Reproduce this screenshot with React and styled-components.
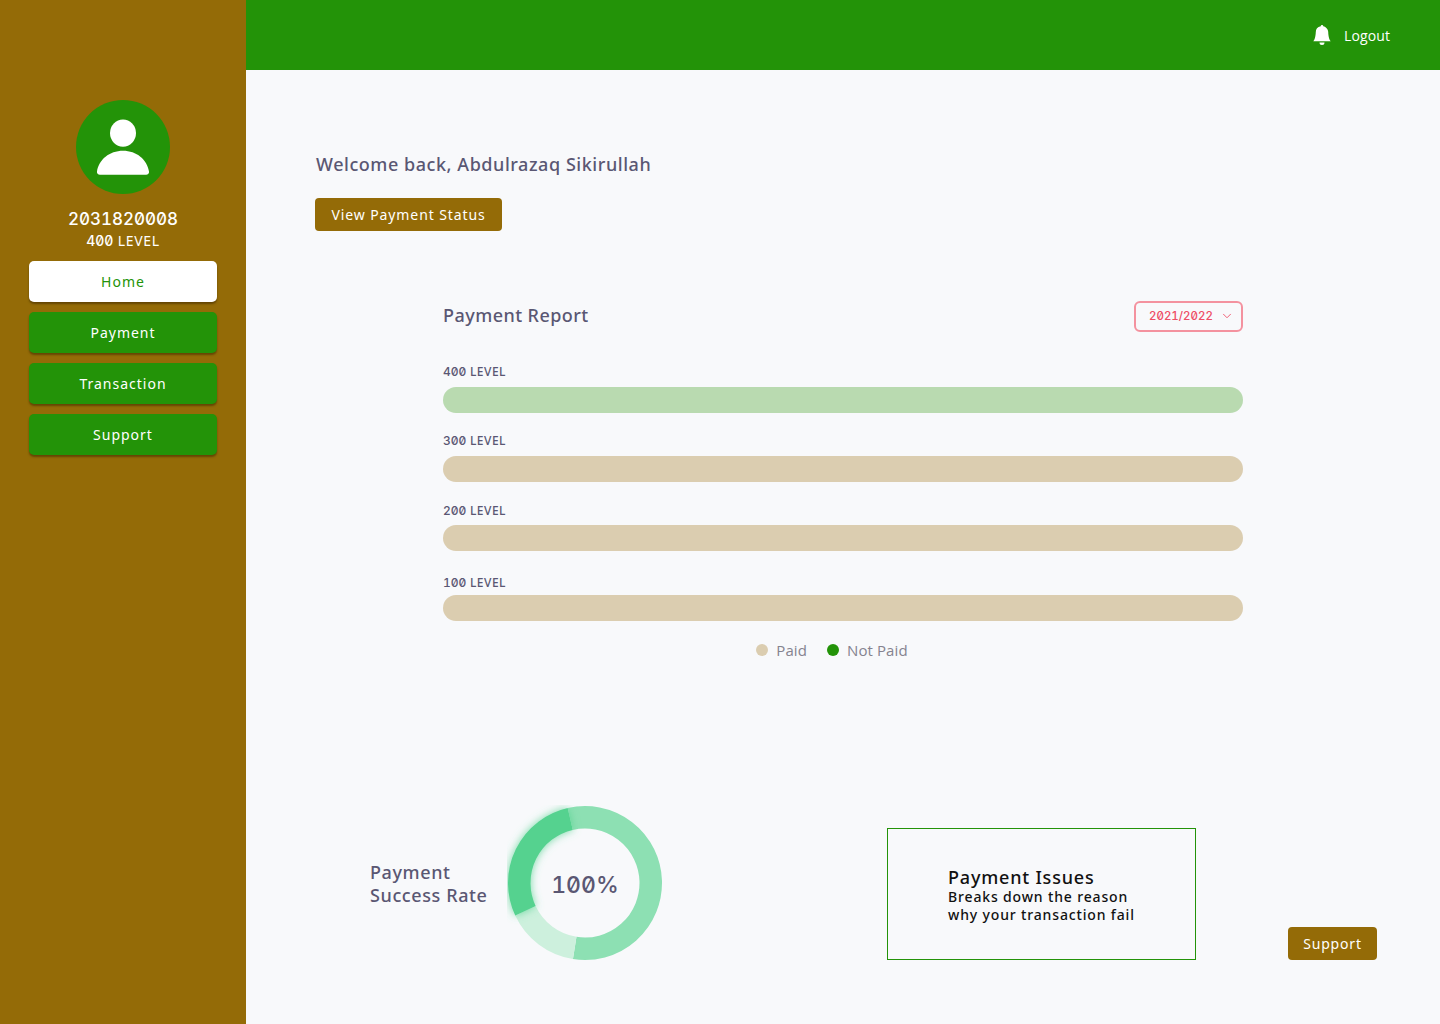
import React from "react";
import styled, { createGlobalStyle } from "styled-components";
import { BsBellFill } from "react-icons/bs";
import { ChevronDown } from "lucide-react";

const green = "#239308";
const brown = "#946b07";
const ink = "#5a5773";

const Global = createGlobalStyle`
  html, body { margin: 0; padding: 0; }
  body { background: #f8f9fb; font-family: "Noto Sans", Arial, sans-serif; }
  * { box-sizing: border-box; }
`;

const Shell = styled.div`
  display: flex;
  width: 1440px;
  height: 1024px;
  overflow: hidden;
`;
const Sidebar = styled.aside`
  width: 246px;
  flex: none;
  background: ${brown};
  display: flex;
  flex-direction: column;
  align-items: center;
  padding-top: 100px;
`;
const Avatar = styled.div`
  width: 94px;
  height: 94px;
  border-radius: 50%;
  background: ${green};
  display: flex;
  align-items: center;
  justify-content: center;
`;
const Digits = styled.span`
  font-family: Inter, "DejaVu Sans Mono", monospace;
  font-feature-settings: "zero", "tnum";
  font-weight: ${(p) => p.$weight || 500};
  letter-spacing: ${(p) => p.$track || "0"};
`;
const Matric = styled.div`
  margin-top: 14px;
  height: 22px;
  line-height: 22px;
  font-size: 17px;
  color: #fff;
`;
const Level = styled.div`
  height: 22px;
  line-height: 22px;
  font-size: 14px;
  letter-spacing: 0.7px;
  color: #fff;
`;
const Nav = styled.nav`
  margin-top: 9px;
  display: flex;
  flex-direction: column;
  gap: 10px;
  width: 188px;
`;
const NavItem = styled.button`
  height: 41px;
  border: 0;
  border-radius: 5px;
  padding: 0;
  background: ${(p) => (p.$active ? "#fff" : green)};
  color: ${(p) => (p.$active ? green : "#fff")};
  font: 400 14px "Noto Sans", sans-serif;
  letter-spacing: 1px;
  box-shadow: 0 2px 2px rgba(60, 40, 0, 0.55);
`;
const Body = styled.div`
  flex: 1;
  display: flex;
  flex-direction: column;
  min-width: 0;
`;
const Topbar = styled.header`
  height: 70px;
  flex: none;
  background: ${green};
  color: #fff;
  display: flex;
  align-items: center;
  justify-content: flex-end;
  padding-right: 50px;
  gap: 12px;
`;
const LogoutText = styled.span`
  font: 400 14px "Open Sans", sans-serif;
  letter-spacing: 0.1px;
  color: #fff;
`;
const Main = styled.main`
  flex: 1;
  position: relative;
  padding: 81px 0 0 69px;
`;
const Welcome = styled.h1`
  margin: 0 0 0 1px;
  height: 26px;
  line-height: 26px;
  font-size: 18px;
  font-weight: 500;
  letter-spacing: 0.55px;
  color: ${ink};
`;
const BrownButton = styled.button`
  display: block;
  height: 33px;
  border: 0;
  border-radius: 4px;
  background: ${brown};
  color: #fff;
  font: 400 14px "Noto Sans", sans-serif;
  letter-spacing: ${(p) => p.$track};
  padding: 0;
  width: ${(p) => p.$w}px;
`;
const StatusButton = styled(BrownButton)`
  margin-top: 21px;
`;
const Report = styled.section`
  width: 800px;
  margin: 70px 0 0 128px;
`;
const ReportHead = styled.div`
  display: flex;
  justify-content: space-between;
  align-items: center;
  height: 30px;
`;
const ReportTitle = styled.h2`
  margin: 0 0 2px;
  font-size: 18px;
  font-weight: 500;
  letter-spacing: 0.45px;
  color: ${ink};
`;
const YearSelect = styled.div`
  width: 109px;
  height: 31px;
  border: 2px solid #f4929f;
  border-radius: 6px;
  color: #ee4d65;
  display: flex;
  align-items: center;
  padding-left: 13px;
  gap: 7px;
  font-size: 11.5px;
`;
const Row = styled.div`
  margin-top: ${(p) => p.$top}px;
`;
const RowLabel = styled.div`
  height: 16px;
  line-height: 16px;
  font-size: 12px;
  font-weight: 500;
  letter-spacing: 0.5px;
  color: ${ink};
`;
const Bar = styled.div`
  height: 26px;
  margin-top: ${(p) => p.$gap}px;
  border-radius: 13px;
  background: ${(p) => p.$color};
`;
const Legend = styled.div`
  display: flex;
  align-items: center;
  justify-content: center;
  margin: 19px 0 0 -22px;
  gap: 20px;
  height: 20px;
`;
const LegendItem = styled.div`
  display: flex;
  align-items: center;
  gap: 8px;
  font: 400 15px "Open Sans", sans-serif;
  letter-spacing: 0.1px;
  color: #85838f;
`;
const Dot = styled.span`
  width: 12px;
  height: 12px;
  border-radius: 50%;
  background: ${(p) => p.$color};
`;
const Bottom = styled.div`
  display: flex;
  align-items: flex-start;
  margin: 145px 0 0 55px;
`;
const RateLabel = styled.div`
  width: 137px;
  margin-top: 56px;
  font-size: 18px;
  line-height: 23px;
  font-weight: 500;
  letter-spacing: 0.6px;
  color: ${ink};
`;
const Donut = styled.div`
  position: relative;
  width: 156px;
  height: 156px;
  flex: none;
`;
const DonutText = styled.div`
  position: absolute;
  inset: 3px 0 0;
  display: flex;
  align-items: center;
  justify-content: center;
  font-size: 23px;
  color: ${ink};
`;
const IssueCard = styled.div`
  width: 309px;
  height: 132px;
  margin: 23px 0 0 224px;
  border: 1px solid ${green};
  padding: 37px 0 0 60px;
  color: #111;
`;
const IssueTitle = styled.div`
  font-size: 18px;
  line-height: 22px;
  font-weight: 500;
  letter-spacing: 0.8px;
`;
const IssueText = styled.div`
  font-size: 14px;
  line-height: 18px;
  font-weight: 500;
  letter-spacing: 0.85px;
`;
const SupportButton = styled(BrownButton)`
  margin: 122px 0 0 92px;
`;

const polar = (deg, r = 65.75) => {
  const a = ((deg - 90) * Math.PI) / 180;
  return [78 + r * Math.cos(a), 78 + r * Math.sin(a)];
};
const arc = (a, b) => {
  const [x1, y1] = polar(a);
  const [x2, y2] = polar(b);
  const large = (b - a + 360) % 360 > 180 ? 1 : 0;
  return `M${x1} ${y1}A65.75 65.75 0 ${large} 1 ${x2} ${y2}`;
};

const rows = [
  { label: "400", color: "#b9dab0", top: 33, gap: 7 },
  { label: "300", color: "#dbcdb0", top: 20, gap: 7 },
  { label: "200", color: "#dbcdb0", top: 21, gap: 6 },
  { label: "100", color: "#dbcdb0", top: 24, gap: 4 },
];

export default function App() {
  return (
    <Shell>
      <Global />
      <Sidebar>
        <Avatar>
          <svg width="94" height="94" viewBox="0 0 94 94">
            <ellipse cx="47" cy="33.1" rx="13" ry="13.7" fill="#fff" />
            <path d="M24 74.700c-2 0-3.400-1.400-3-3.200C22.800 59.500 33.500 50.700 47 50.700s24.200 8.800 26 20.800c.4 1.800-1 3.200-3 3.200z" fill="#fff" />
          </svg>
        </Avatar>
        <Matric><Digits>2031820008</Digits></Matric>
        <Level><Digits>400</Digits> LEVEL</Level>
        <Nav>
          <NavItem $active>Home</NavItem>
          <NavItem>Payment</NavItem>
          <NavItem>Transaction</NavItem>
          <NavItem>Support</NavItem>
        </Nav>
      </Sidebar>
      <Body>
        <Topbar>
          <BsBellFill size={20} />
          <LogoutText>Logout</LogoutText>
        </Topbar>
        <Main>
          <Welcome>Welcome back, Abdulrazaq Sikirullah</Welcome>
          <StatusButton $w={187} $track="0.9px">View Payment Status</StatusButton>
          <Report>
            <ReportHead>
              <ReportTitle>Payment Report</ReportTitle>
              <YearSelect>
                <Digits>2021/2022</Digits>
                <ChevronDown size={14} strokeWidth={1.5} />
              </YearSelect>
            </ReportHead>
            {rows.map((r) => (
              <Row key={r.label} $top={r.top}>
                <RowLabel><Digits>{r.label}</Digits> LEVEL</RowLabel>
                <Bar $gap={r.gap} $color={r.color} />
              </Row>
            ))}
            <Legend>
              <LegendItem><Dot $color="#dbcdb0" />Paid</LegendItem>
              <LegendItem><Dot $color={green} />Not Paid</LegendItem>
            </Legend>
          </Report>
          <Bottom>
            <RateLabel>Payment<br />Success Rate</RateLabel>
            <Donut>
              <svg width="156" height="156" viewBox="0 0 156 156" fill="none" strokeWidth="22.500">
                <defs>
                  <filter id="glow" x="-30%" y="-30%" width="160%" height="160%">
                    <feDropShadow dx="0" dy="0" stdDeviation="4" floodColor="#54d28f" floodOpacity="0.8" />
                  </filter>
                </defs>
                <path d={arc(347, 189)} stroke="#8de0b3" />
                <path d={arc(189, 245)} stroke="#cdf0dd" />
                <path d={arc(245, 347)} stroke="#54d28f" filter="url(#glow)" />
              </svg>
              <DonutText><Digits>100%</Digits></DonutText>
            </Donut>
            <IssueCard>
              <IssueTitle>Payment Issues</IssueTitle>
              <IssueText>Breaks down the reason<br />why your transaction fail</IssueText>
            </IssueCard>
            <SupportButton $w={89} $track="0.8px">Support</SupportButton>
          </Bottom>
        </Main>
      </Body>
    </Shell>
  );
}
